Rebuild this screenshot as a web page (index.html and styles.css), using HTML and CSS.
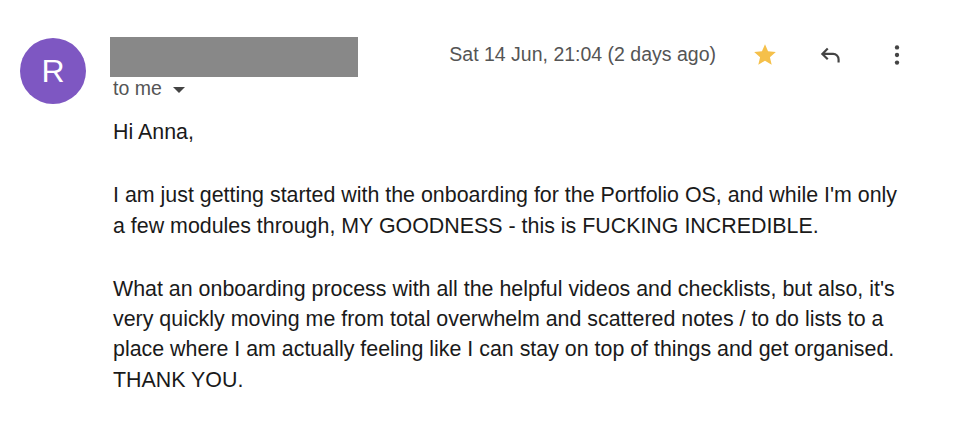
FILE: index.html
```html
<!DOCTYPE html>
<html lang="en">
<head>
    <meta charset="UTF-8">
    <title>Email</title>
    <link rel="stylesheet" href="styles.css">
</head>
<body>

<div class="mail">
    <div class="avatar">R</div>

    <div class="main">
        <div class="head">
            <div class="sender">
                <div class="name-blur"></div>
                <div class="to">to me <span class="caret"></span></div>
            </div>
            <div class="meta">
                <span class="date">Sat 14 Jun, 21:04 (2 days ago)</span>
                <svg class="icon star" viewBox="0 0 24 24" width="26" height="26">
                    <path d="M12 17.27L18.18 21l-1.64-7.03L22 9.24l-7.19-.61L12 2 9.19 8.63 2 9.24l5.46 4.73L5.82 21z" fill="#f5c04a"/>
                </svg>
                <svg class="icon reply" viewBox="0 0 24 24" width="26" height="26">
                    <path d="M9 6L4 11l5 5M4 11h10a5 5 0 0 1 5 5v3" fill="none" stroke="#444" stroke-width="2"/>
                </svg>
                <svg class="icon more" viewBox="0 0 24 24" width="26" height="26">
                    <circle cx="12" cy="5" r="2" fill="#444"/>
                    <circle cx="12" cy="12" r="2" fill="#444"/>
                    <circle cx="12" cy="19" r="2" fill="#444"/>
                </svg>
            </div>
        </div>

        <div class="body">
            <p>Hi Anna,</p>
            <p>I am just getting started with the onboarding for the Portfolio OS, and while I'm only<br>
            a few modules through, MY GOODNESS - this is FUCKING INCREDIBLE.</p>
            <p>What an onboarding process with all the helpful videos and checklists, but also, it's<br>
            very quickly moving me from total overwhelm and scattered notes / to do lists to a<br>
            place where I am actually feeling like I can stay on top of things and get organised.<br>
            THANK YOU.</p>
        </div>
    </div>
</div>

</body>
</html>
```

FILE: styles.css
```css
body {
    margin: 0;
    background-color: #ffffff;
    font-family: 'Liberation Sans', Arial, sans-serif;
    color: #222222;
}

.mail {
    display: flex;
    padding: 37px 0 0 20px;
}

.avatar {
    width: 66px;
    height: 66px;
    border-radius: 50%;
    background-color: #7e57c2;
    color: #ffffff;
    font-size: 32px;
    display: flex;
    justify-content: center;
    align-items: center;
    flex-shrink: 0;
    margin-top: 1px;
}

.main {
    margin-left: 24px;
    flex: 1;
}

.head {
    display: flex;
    justify-content: space-between;
}

.name-blur {
    width: 248px;
    height: 40px;
    background-color: #888888;
}

.to {
    margin-left: 3px;
    font-size: 19.5px;
    color: #555555;
    line-height: 22px;
}

.caret {
    display: inline-block;
    margin-left: 6px;
    vertical-align: middle;
    border-left: 6px solid transparent;
    border-right: 6px solid transparent;
    border-top: 6px solid #444444;
}

.meta {
    display: flex;
    align-items: center;
    height: 35px;
    padding-right: 52px;
}

.date {
    font-size: 19.5px;
    color: #555555;
    margin-right: 36px;
}

.icon {
    display: block;
}

.star {
    margin-right: 40px;
}

.reply {
    margin-right: 40px;
}

.body {
    margin-left: 3px;
    margin-top: 18px;
    font-size: 21.4px;
    line-height: 30.3px;
    color: #1a1a1a;
}

.body p {
    margin: 0 0 33px 0;
}
```
